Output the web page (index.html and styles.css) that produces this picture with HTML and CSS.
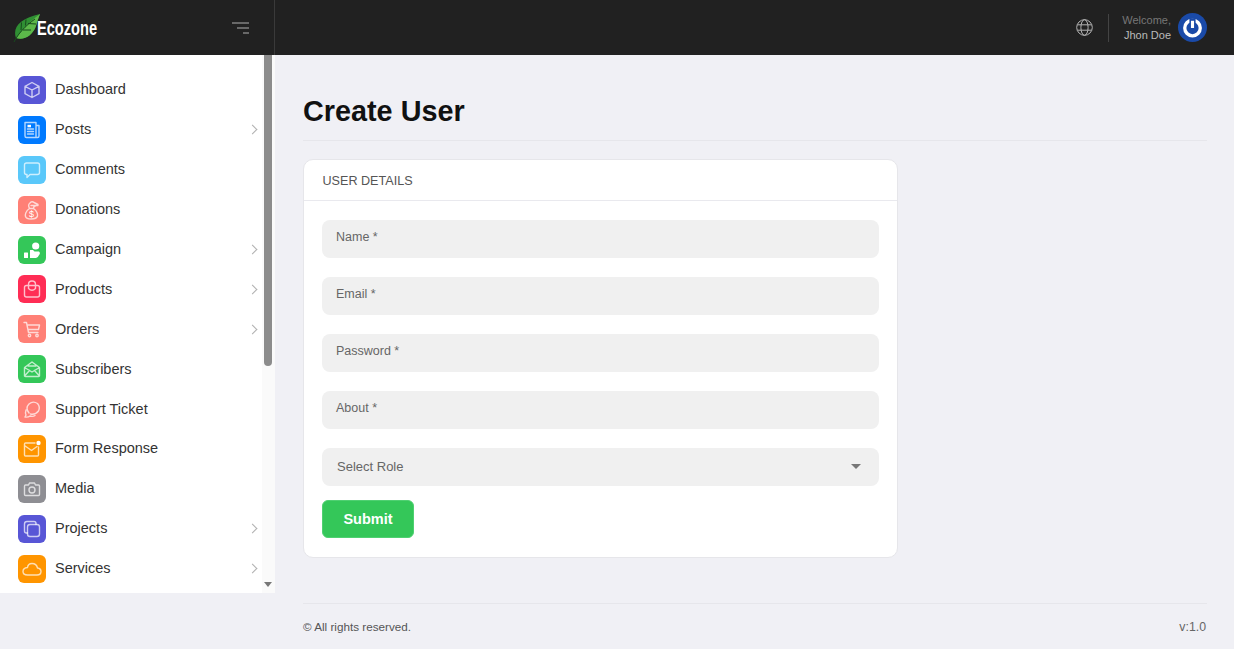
FILE: index.html
```html
<!DOCTYPE html>
<html lang="en">
<head>
<meta charset="utf-8">
<title>Create User</title>
<link rel="stylesheet" href="styles.css">
</head>
<body>
<header class="topbar">
  <div class="brand">
    <div class="logo">
      <svg class="leaf" width="28" height="30" viewBox="0 0 28 30"><path d="M3 25C-1 14 8 5 27 1C25 6 24 9 23 13C20 22 11 28 3 25Z" fill="#2f8f33"/><path d="M27 1C19 7 12 13 3 25C11 28 20 22 23 13C24 9 25 6 27 1Z" fill="#5cb84a"/><path d="M1 29C5 21 12 13 22 6M8 17L8.500 9.500M12.500 12.500L13 6.500M10 17L18 17M15 10.500L23 11" stroke="#17491d" stroke-width="1" fill="none"/></svg>
      <span class="logo-text">Ecozone</span>
    </div>
    <svg class="toggle" width="17" height="12" viewBox="0 0 17 12"><path d="M0 1H17M5 6H17M11 11H17" stroke="#808080" stroke-width="1.5"/></svg>
  </div>
  <div class="top-right">
    <svg class="globe" width="17" height="17" viewBox="0 0 17 17" fill="none" stroke="#b4b4b4" stroke-width="1"><circle cx="8.500" cy="8.500" r="7.800"/><ellipse cx="8.500" cy="8.500" rx="3.600" ry="7.800"/><path d="M1.400 5.800H15.600M1.400 11.200H15.600"/></svg>
    <div class="divider"></div>
    <div class="user-text">
      <span class="welcome">Welcome,</span>
      <span class="username">Jhon Doe</span>
    </div>
    <svg class="avatar" width="29" height="29" viewBox="0 0 28 28"><circle cx="14" cy="14" r="14" fill="#1a4aa8"/><circle cx="14" cy="14.500" r="7.500" fill="none" stroke="#fff" stroke-width="3.200"/><path d="M14 5V13" stroke="#1a4aa8" stroke-width="6"/><path d="M14 7.500V14.500" stroke="#fff" stroke-width="3"/></svg>
  </div>
</header>
<div class="layout">
  <aside class="sidebar">
    <nav class="menu">
      <a class="item"><span class="ico purple"><svg viewBox="0 0 28 28"><path d="M14 6.500L21 10.300V17.700L14 21.500L7 17.700V10.300ZM7 10.300L14 14L21 10.300M14 14V21.500"/></svg></span><span class="label">Dashboard</span></a>
      <a class="item"><span class="ico blue"><svg viewBox="0 0 28 28"><path d="M7 6.500H18V21.500H8.500Q7 21.500 7 20ZM18 9.500H21V20Q21 21.500 19.500 21.500H18M9.500 13H15.500M9.500 15.500H15.500M9.500 18H15.500"/><rect class="fill" x="9.500" y="8.800" width="3.500" height="2.500"/></svg></span><span class="label">Posts</span><span class="chev"></span></a>
      <a class="item"><span class="ico sky"><svg viewBox="0 0 28 28"><path d="M8.500 7H19.500Q21.500 7 21.500 9V16.500Q21.500 18.500 19.500 18.500H12L9 21.500V18.500H8.500Q6.500 18.500 6.500 16.500V9Q6.500 7 8.500 7Z"/></svg></span><span class="label">Comments</span></a>
      <a class="item"><span class="ico salmon"><svg viewBox="0 0 28 28"><path d="M11.500 12.500C7.500 15 7 19 7.500 20.500C8 22 10 23 13 23C16.500 23 19 22 19.500 20C20 18 18.500 14.500 15.500 12.500ZM11.500 12.500C10 9.500 10.500 8 12 7C13 5.500 15 5.500 16 6.500L20 8.500L16 10.500L15.500 12.500M13 9.500L20 9.500"/><text class="dollar" x="13.500" y="20.500">$</text></svg></span><span class="label">Donations</span></a>
      <a class="item"><span class="ico green"><svg viewBox="0 0 28 28"><circle class="fill" cx="17.700" cy="10" r="3.600"/><rect class="fill" x="6" y="16.500" width="4" height="5.500" rx=".5"/><path class="fill" d="M12 14H15L16.500 15.500H21L22 17Q20.500 21.500 18 22H12Z"/></svg></span><span class="label">Campaign</span><span class="chev"></span></a>
      <a class="item"><span class="ico pink"><svg viewBox="0 0 28 28"><path d="M8.500 10.500H19.500Q21.500 10.500 21.500 12.500V20Q21.500 22 19.500 22H8.500Q6.500 22 6.500 20V12.500Q6.500 10.500 8.500 10.500ZM10.500 10.500V9.500Q10.500 6 14 6Q17.500 6 17.500 9.500V13.500Q14 17 10.500 13.500Z"/></svg></span><span class="label">Products</span><span class="chev"></span></a>
      <a class="item"><span class="ico salmon"><svg viewBox="0 0 28 28"><path d="M6 7.500H8.500L10.500 17.500H20M9 10H21.500L20.500 14.500H10"/><circle cx="11.500" cy="20.500" r="1.200"/><circle cx="19" cy="20.500" r="1.200"/></svg></span><span class="label">Orders</span><span class="chev"></span></a>
      <a class="item"><span class="ico green"><svg viewBox="0 0 28 28"><path d="M6.500 12.500L14 7L21.500 12.500V20.500Q21.500 21.500 20.500 21.500H7.500Q6.500 21.500 6.500 20.500ZM6.500 12.500L14 17L21.500 12.500M6.500 21L11.500 15.500M21.500 21L16.500 15.500M10 11H18"/></svg></span><span class="label">Subscribers</span></a>
      <a class="item"><span class="ico salmon"><svg viewBox="0 0 28 28"><path d="M11 18Q7 13 11 9Q15 5.500 19.500 8.500Q22.500 12 20.500 16Q17.500 20 12.500 19M8 15Q7 18 8 20L7 22Q10 22.500 12 21Q15 22 17 20.500"/></svg></span><span class="label">Support Ticket</span></a>
      <a class="item"><span class="ico orange"><svg viewBox="0 0 28 28"><path d="M17 8H7.500Q6.500 8 6.500 9V20Q6.500 21 7.500 21H19.500Q20.500 21 20.500 20V12M6.500 10.500L13.500 15.500L19 11.500"/><circle class="fill" cx="20.500" cy="8" r="2.200"/></svg></span><span class="label">Form Response</span></a>
      <a class="item"><span class="ico gray"><svg viewBox="0 0 28 28"><path d="M7.500 10H10.500L11.500 8H16.500L17.500 10H20.500Q21.500 10 21.500 11V19.500Q21.500 20.500 20.500 20.500H7.500Q6.500 20.500 6.500 19.500V11Q6.500 10 7.500 10Z"/><circle cx="14" cy="15" r="3"/></svg></span><span class="label">Media</span></a>
      <a class="item"><span class="ico purple"><svg viewBox="0 0 28 28"><rect x="9.500" y="9.500" width="12" height="12" rx="2.500"/><path d="M9.500 18H8.500Q6.500 18 6.500 16V9Q6.500 6.500 9 6.500H16Q18 6.500 18 8.500V9.500"/></svg></span><span class="label">Projects</span><span class="chev"></span></a>
      <a class="item"><span class="ico orange"><svg viewBox="0 0 28 28"><path d="M9.500 20H19Q23 20 23 16.500Q23 13.500 19.500 13Q18.500 8.500 14 8.500Q10 8.500 9.500 12.500Q5 13 5 16.500Q5 20 9.500 20Z"/></svg></span><span class="label">Services</span><span class="chev"></span></a>
    </nav>
    <div class="scrollbar">
      <div class="thumb"></div>
      <div class="arrow"></div>
    </div>
  </aside>
  <main class="content">
    <div class="content-body">
      <h1 class="title">Create User</h1>
      <section class="card">
        <div class="card-head">USER DETAILS</div>
        <form class="card-body">
          <div class="field">Name *</div>
          <div class="field">Email *</div>
          <div class="field">Password *</div>
          <div class="field">About *</div>
          <div class="field select"><span>Select Role</span><span class="caret"></span></div>
          <button class="submit" type="button">Submit</button>
        </form>
      </section>
    </div>
    <footer class="footer">
      <span class="copy">© All rights reserved.</span>
      <span class="version">v:1.0</span>
    </footer>
  </main>
</div>
</body>
</html>
```
FILE: styles.css
```css
* { box-sizing: border-box; }
html, body { margin: 0; height: 100%; }
body {
  width: 1234px;
  height: 649px;
  overflow: hidden;
  background: #f0f0f5;
  font-family: "Liberation Sans", Arial, sans-serif;
  color: #333;
  display: flex;
  flex-direction: column;
}
.topbar {
  height: 55px;
  flex: none;
  background: #212121;
  display: flex;
  justify-content: space-between;
  align-items: stretch;
}
.brand {
  width: 275px;
  border-right: 1px solid #3a3a3a;
  display: flex;
  align-items: center;
  padding-left: 13px;
  padding-right: 25px;
  justify-content: space-between;
}
.logo { display: flex; align-items: flex-end; height: 30px; }
.leaf { margin-top: -1px; flex: none; }
.logo-text {
  display: inline-block;
  margin-left: -4px;
  margin-bottom: 3px;
  width: 60px;
  color: #fff;
  font-weight: 700;
  font-size: 20px;
  line-height: 24px;
  white-space: nowrap;
  transform: scaleX(.73);
  transform-origin: left center;
}
.toggle { margin-top: 1px; }
.top-right {
  display: flex;
  align-items: center;
  padding-right: 27px;
}
.globe { margin-right: 15px; }
.divider { width: 1px; height: 28px; background: #444; margin-right: 13px; }
.user-text {
  display: flex;
  flex-direction: column;
  align-items: flex-end;
  font-size: 11px;
  line-height: 15px;
  margin-right: 7px;
  margin-top: 1px;
}
.welcome { color: #777; }
.username { color: #bbb; }
.layout { flex: 1; display: flex; min-height: 0; }
.sidebar {
  width: 275px;
  height: 538px;
  flex: none;
  background: #fff;
  display: flex;
  justify-content: space-between;
}
.menu { width: 262px; padding: 15px 0 0 18px; }
.item {
  display: flex;
  align-items: center;
  height: 39.9px;
  font-size: 14.5px;
  color: #333;
}
.ico {
  width: 28px;
  height: 28px;
  border-radius: 6px;
  flex: none;
  display: block;
}
.ico svg {
  display: block;
  width: 28px;
  height: 28px;
  fill: none;
  stroke: #fff;
  stroke-opacity: .7;
  stroke-width: 1.4;
  stroke-linejoin: round;
  stroke-linecap: round;
}
.ico svg .fill { fill: #fff; stroke: none; }
.ico svg .dollar { fill: #fff; stroke: none; font-size: 9px; text-anchor: middle; font-family: "Liberation Sans", sans-serif; }
.purple { background: #5856d6; }
.blue { background: #007aff; }
.sky { background: #5ac8fa; }
.salmon { background: #ff8076; }
.green { background: #34c759; }
.pink { background: #ff2d55; }
.orange { background: #ff9500; }
.gray { background: #8e8e93; }
.label { margin-left: 9px; flex: 1; padding-bottom: 1px; }
.chev {
  width: 7px;
  height: 7px;
  border-top: 1.5px solid #b0b0b0;
  border-right: 1.5px solid #b0b0b0;
  transform: rotate(45deg);
  margin-right: 6px;
  flex: none;
}
.scrollbar {
  width: 13px;
  background: #fafafa;
  padding-left: 2px;
  padding-right: 3px;
  display: flex;
  flex-direction: column;
  justify-content: space-between;
  padding-bottom: 6px;
}
.thumb { width: 8px; height: 311px; background: #8c8c8c; border-radius: 0 0 4px 4px; }
.arrow {
  width: 0;
  height: 0;
  border-left: 4px solid transparent;
  border-right: 4px solid transparent;
  border-top: 5px solid #777;
}
.content {
  flex: 1;
  padding: 0 27px 0 28px;
  display: flex;
  flex-direction: column;
  min-width: 0;
}
.content-body { flex: 1; padding-top: 39px; }
.title {
  margin: 0;
  font-size: 28.8px;
  line-height: 34px;
  font-weight: 700;
  color: #111;
  padding-bottom: 12px;
  border-bottom: 1px solid #e6e6eb;
  margin-bottom: 18px;
}
.card {
  width: 595px;
  height: 399px;
  background: #fff;
  border: 1px solid #e6e6ea;
  border-radius: 10px;
}
.card-head {
  height: 41px;
  padding: 1px 18.5px 0;
  display: flex;
  align-items: center;
  font-size: 12.6px;
  color: #555;
  border-bottom: 1px solid #e9e9ee;
}
.card-body {
  padding: 18.5px 18px 0;
  display: flex;
  flex-direction: column;
}
.field {
  height: 38.5px;
  background: #f0f0f0;
  border-radius: 8px;
  margin-bottom: 18.5px;
  padding: 0 14px 4px;
  font-size: 12.5px;
  color: #666;
  display: flex;
  align-items: center;
}
.select {
  justify-content: space-between;
  padding: 0 18px 0 15px;
  margin-bottom: 14px;
  font-size: 13px;
}
.caret {
  width: 0;
  height: 0;
  border-left: 5px solid transparent;
  border-right: 5px solid transparent;
  border-top: 5px solid #777;
}
.submit {
  width: 92px;
  height: 38px;
  border: 1px solid #4fd071;
  border-radius: 6px;
  background: #34c759;
  color: #fff;
  font-family: inherit;
  font-weight: 700;
  font-size: 14.5px;
  padding: 0;
}
.footer {
  height: 46px;
  flex: none;
  border-top: 1px solid #e6e6eb;
  display: flex;
  justify-content: space-between;
  align-items: center;
  font-size: 12px;
  color: #555;
}
.copy { font-size: 11.7px; }
.version { color: #666; margin-right: 1px; font-size: 12.3px; }
```
